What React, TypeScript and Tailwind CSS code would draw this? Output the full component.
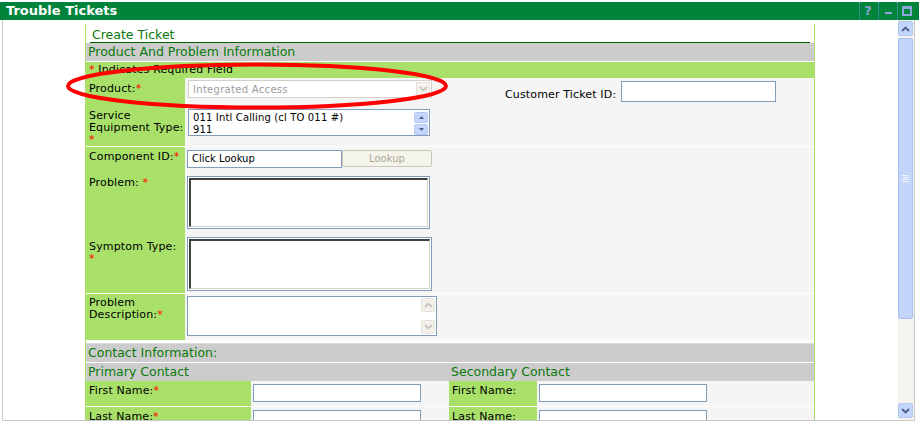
import { ReactNode } from "react";

const Req = () => <span className="text-[#ff0000]">*</span>;

const Label = ({
  children,
  className = "",
}: {
  children: ReactNode;
  className?: string;
}) => (
  <div
    className={`shrink-0 bg-[#a8e06a] pl-[3px] text-[11px] leading-[12px] tracking-[0.15px] text-black ${className}`}
  >
    {children}
  </div>
);

const Band = ({ children }: { children?: ReactNode }) => (
  <div className="h-[19px] border-b border-white bg-[#cccccc] pl-[2px] text-[12.5px] leading-[18px] text-[#0a780a]">
    {children}
  </div>
);

const TextBox = ({ className = "" }: { className?: string }) => (
  <div className={`border border-[#7f9db9] bg-white ${className}`} />
);

const Arrow = ({ up, color = "#4d6185" }: { up?: boolean; color?: string }) => (
  <svg width="9" height="6" viewBox="0 0 9 6">
    <path
      d={up ? "M1 5 L4.5 1.5 L8 5" : "M1 1 L4.5 4.5 L8 1"}
      stroke={color}
      strokeWidth="1.8"
      fill="none"
    />
  </svg>
);

const Tri = ({ up }: { up?: boolean }) => (
  <svg width="5" height="3" viewBox="0 0 5 3">
    <path d={up ? "M0 3 L2.5 0 L5 3 Z" : "M0 0 L2.5 3 L5 0 Z"} fill="#4d6185" />
  </svg>
);

const TextArea = ({ className = "" }: { className?: string }) => (
  <div className={`border border-[#7f9db9] bg-white p-[1px] ${className}`}>
    <div className="h-full w-full border-t-2 border-l-2 border-b border-r border-t-[#404040] border-l-[#404040] border-b-[#d4d0c8] border-r-[#d4d0c8]" />
  </div>
);

/**********************
 * Title bar
 */
const TitleBar = () => (
  <div className="mt-[2px] flex h-[18px] items-stretch justify-between bg-[#00843b]">
    <div className="pl-[6px] text-[13px] font-bold leading-[18px] text-white">
      Trouble Tickets
    </div>
    <div className="flex pr-[4px]">
      <div className="flex w-[19px] items-center justify-center border-l border-dotted border-[#6f8fe0] pr-[2px] text-[13px] font-bold text-[#8ea6d8]">
        ?
      </div>
      <div className="flex w-[19px] items-center justify-center border-l border-dotted border-[#6f8fe0]">
        <div className="mt-[3px] h-[2px] w-[7px] bg-[#8ea6d8]" />
      </div>
      <div className="flex w-[18px] items-center justify-center border-l border-dotted border-[#6f8fe0]">
        <div className="h-[10px] w-[10px] border-2 border-t-[3px] border-[#8ea6d8]" />
      </div>
    </div>
  </div>
);

/**********************
 * Scrollbar
 */
const Scrollbar = () => (
  <div className="flex h-full w-[16px] shrink-0 flex-col bg-[#f4f3ee] pt-[1px]">
    <div className="flex h-[15px] w-[15px] items-center justify-center rounded-[2px] border border-[#b5c8f0] bg-[#c5d6fc]">
      <Arrow up />
    </div>
    <div className="mt-[2px] flex h-[281px] w-[15px] items-center justify-center rounded-[2px] border border-[#aac0f0] bg-[#c4d5fc]">
      <div className="flex flex-col gap-[1px]">
        <div className="h-[1px] w-[7px] bg-[#eef3fe]" />
        <div className="h-[1px] w-[7px] bg-[#eef3fe]" />
        <div className="h-[1px] w-[7px] bg-[#eef3fe]" />
        <div className="h-[1px] w-[7px] bg-[#eef3fe]" />
      </div>
    </div>
    <div className="flex-1" />
    <div className="mb-[2px] flex h-[15px] w-[15px] items-center justify-center rounded-[2px] border border-[#b5c8f0] bg-[#c5d6fc]">
      <Arrow />
    </div>
  </div>
);

/**********************
 * Form
 */
const ProductSection = () => (
  <div>
    {/* Product */}
    <div className="flex h-[28px]">
      <Label className="w-[99px] pt-[5px]">
        Product:<Req />
      </Label>
      <div className="flex flex-1 items-start bg-[#f5f5f5]">
        <div className="ml-[3px] mt-[2px] flex h-[18px] w-[244px] items-center justify-between border border-[#d4d0c8] bg-white pl-[4px] text-[10px] tracking-[0.3px] text-[#9c9c9c]">
          Integrated Access
          <div className="mr-[1px] flex h-[14px] w-[14px] items-center justify-center border border-[#e2e0d8] bg-[#f3f2ec]">
            <Arrow color="#c8c6bc" />
          </div>
        </div>
        <div className="ml-[73px] mt-[11px] w-[116px] whitespace-nowrap text-[11px] leading-[12px] tracking-[0.15px] text-black">
          Customer Ticket ID:
        </div>
        <TextBox className="mt-[3px] h-[21px] w-[155px]" />
      </div>
    </div>

    {/* Service equipment type */}
    <div className="flex h-[41px] border-b border-white">
      <Label className="w-[99px] pt-[4px]">
        Service
        <br />
        Equipment Type:
        <br />
        <Req />
      </Label>
      <div className="flex-1 bg-[#f5f5f5]">
        <div className="ml-[3px] mt-[3px] flex h-[27px] w-[242px] border border-[#7f9db9] bg-white">
          <div className="flex-1 pl-[4px] pt-[2px] text-[10px] leading-[12px] tracking-[0.15px] text-black">
            011 Intl Calling (cl TO 011 #)
            <br />
            911
          </div>
          <div className="flex flex-col gap-[1px] pr-[1px] pt-[2px]">
            <div className="flex h-[11px] w-[14px] items-center justify-center rounded-[2px] border border-[#b5c8f0] bg-[#c5d6fc]">
              <Tri up />
            </div>
            <div className="flex h-[11px] w-[14px] items-center justify-center rounded-[2px] border border-[#b5c8f0] bg-[#c5d6fc]">
              <Tri />
            </div>
          </div>
        </div>
      </div>
    </div>

    {/* Component ID */}
    <div className="flex h-[27px]">
      <Label className="w-[99px] pt-[4px]">
        Component ID:<Req />
      </Label>
      <div className="flex flex-1 items-start bg-[#f5f5f5]">
        <div className="ml-[2px] mt-[3px] h-[18px] w-[155px] border border-[#7f9db9] bg-white pl-[4px] text-[10px] leading-[16px] text-black">
          Click Lookup
        </div>
        <div className="mt-[3px] flex h-[17px] w-[90px] items-center justify-center rounded-[2px] border border-[#cac8bb] bg-[#f5f4ea] text-[10px] text-[#aca899]">
          Lookup
        </div>
      </div>
    </div>

    {/* Problem */}
    <div className="flex h-[58px]">
      <Label className="w-[99px] pt-[3px]">
        Problem: <Req />
      </Label>
      <div className="flex-1 bg-[#f5f5f5]">
        <TextArea className="ml-[2px] mt-[2px] h-[53px] w-[243px]" />
      </div>
    </div>

    {/* Symptom type */}
    <div className="flex h-[62px] border-b border-white">
      <Label className="w-[99px] pt-[9px]">
        Symptom Type:
        <br />
        <Req />
      </Label>
      <div className="flex-1 bg-[#f5f5f5]">
        <TextArea className="ml-[2px] mt-[5px] h-[54px] w-[245px]" />
      </div>
    </div>

    {/* Problem description */}
    <div className="flex h-[47px] border-b border-white">
      <Label className="w-[99px] pt-[3px]">
        Problem
        <br />
        Description:<Req />
      </Label>
      <div className="flex-1 bg-[#f5f5f5]">
        <div className="ml-[2px] mt-[2px] flex h-[40px] w-[250px] justify-end border border-[#7f9db9] bg-white">
          <div className="flex flex-col justify-between py-[1px] pr-[1px]">
            <div className="flex h-[14px] w-[14px] items-center justify-center rounded-[2px] border border-[#e6e4dc] bg-[#f1f0ea]">
              <Arrow up color="#c9c7bd" />
            </div>
            <div className="flex h-[14px] w-[14px] items-center justify-center rounded-[2px] border border-[#e6e4dc] bg-[#f1f0ea]">
              <Arrow color="#c9c7bd" />
            </div>
          </div>
        </div>
      </div>
    </div>
    <div className="h-[3px] border-b border-[#dddddd] bg-white" />
  </div>
);

const ContactSection = () => (
  <div>
    <Band>Contact Information:</Band>
    <div className="flex h-[18px] bg-[#cccccc] text-[12.5px] leading-[18px] text-[#0a780a]">
      <div className="w-[363px] pl-[2px]">Primary Contact</div>
      <div className="pl-[2px]">Secondary Contact</div>
    </div>
    {["First Name:", "Last Name:"].map((name) => (
      <div key={name} className="flex h-[26px] border-b border-white">
        <Label className="w-[165px] pl-[2px] pt-[4px]">
          {name}
          <Req />
        </Label>
        <div className="w-[198px] bg-[#f5f5f5]">
          <TextBox className="ml-[2px] mt-[3px] h-[18px] w-[168px]" />
        </div>
        <Label className="w-[88px] pl-[2px] pt-[4px]">{name}</Label>
        <div className="flex-1 bg-[#f5f5f5]">
          <TextBox className="ml-[2px] mt-[3px] h-[18px] w-[168px]" />
        </div>
      </div>
    ))}
  </div>
);

const Form = () => (
  <div className="w-[730px] border-x border-[#a8e06a] bg-white">
    <div className="px-[4px]">
      <div className="h-[19px] border-b border-[#006400] pl-[2px] pt-[3px] text-[12.5px] leading-[15px] text-[#0a780a]">
        Create Ticket
      </div>
    </div>
    <Band>Product And Problem Information</Band>
    <div className="h-[16px] bg-[#a8e06a] pl-[3px] text-[11px] leading-[16px] tracking-[0.15px] text-black">
      <Req /> Indicates Required Field
    </div>
    <ProductSection />
    <ContactSection />
  </div>
);

/**********************
 * Annotation oval
 */
const Oval = () => (
  <svg
    className="pointer-events-none absolute left-0 top-0"
    width="919"
    height="425"
    viewBox="0 0 919 425"
  >
    <ellipse
      cx="257"
      cy="86"
      rx="189"
      ry="21.5"
      fill="none"
      stroke="#ff0000"
      strokeWidth="4"
    />
  </svg>
);

export default function App() {
  return (
    <div className="relative h-[425px] w-[919px] overflow-hidden bg-white font-['DejaVu_Sans',sans-serif]">
      <TitleBar />
      <div className="ml-[2px] flex h-[401px] w-[913px] border-x border-b border-[#c8c8c8]">
        <div className="h-full flex-1 overflow-hidden pl-[82px] pt-[4px]">
          <Form />
        </div>
        <Scrollbar />
      </div>
      <Oval />
    </div>
  );
}
